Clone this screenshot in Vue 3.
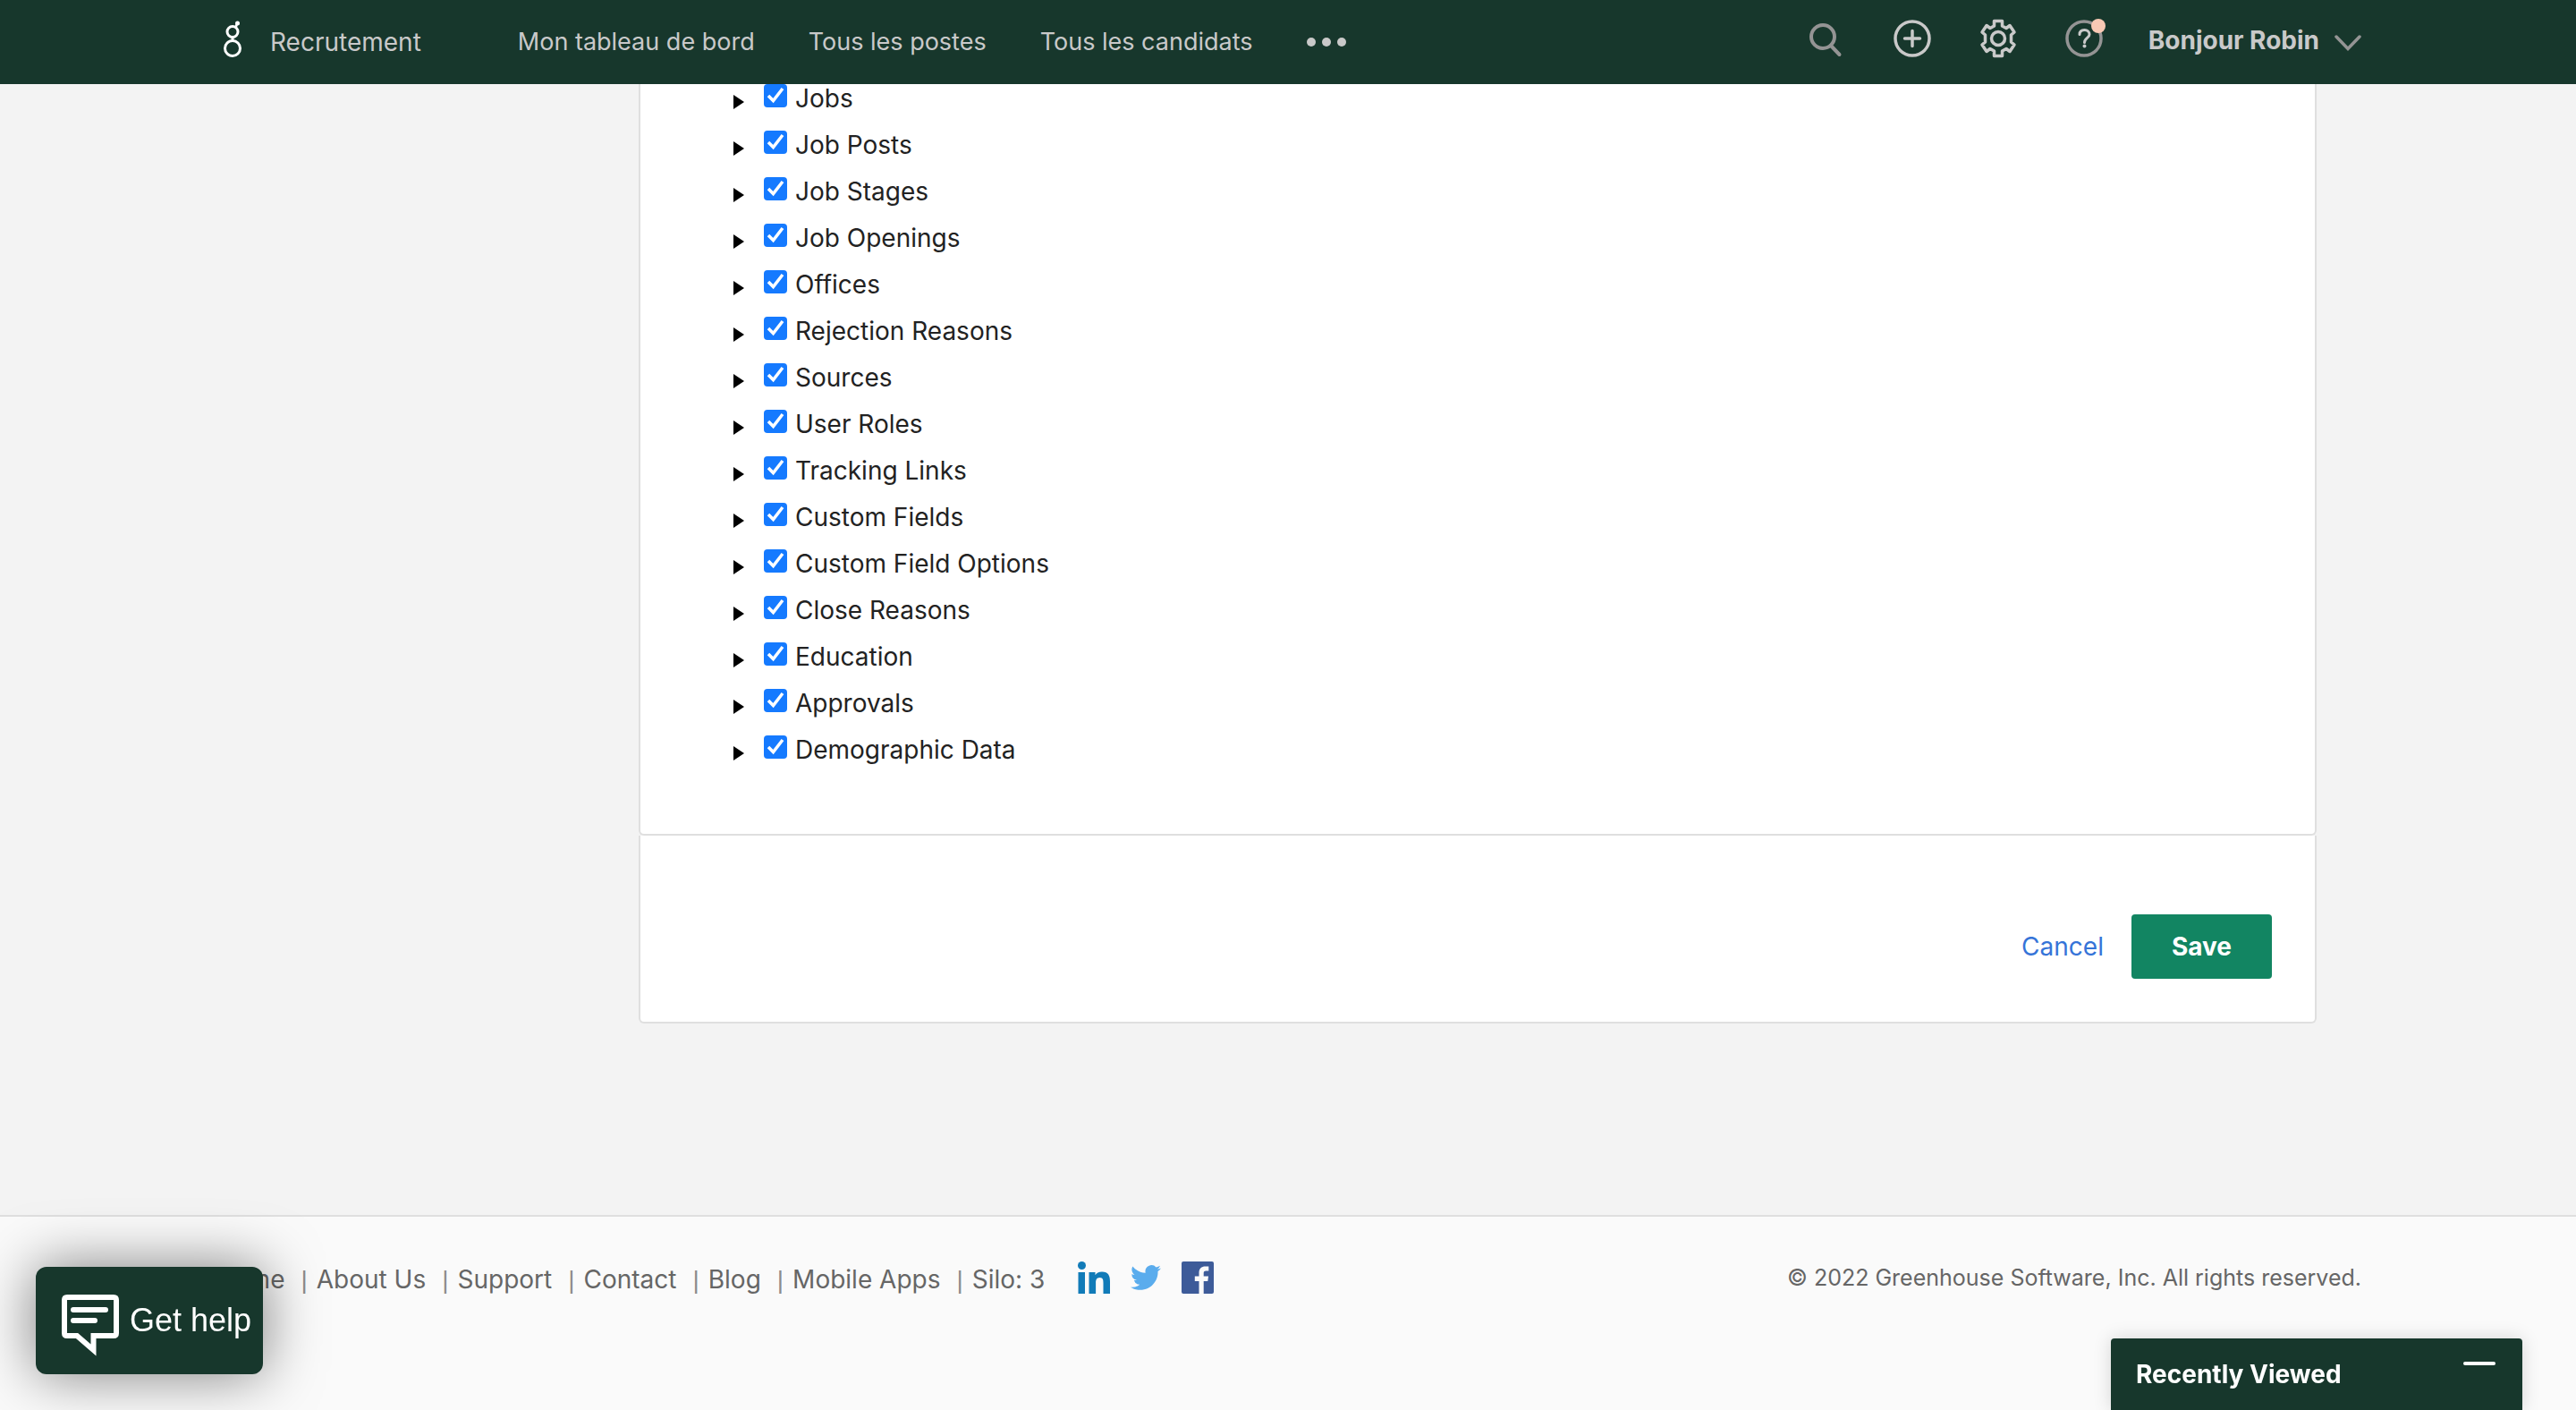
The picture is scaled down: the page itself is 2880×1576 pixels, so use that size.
<script setup>
import { reactive } from 'vue'

const navLinks = ['Mon tableau de bord', 'Tous les postes', 'Tous les candidats']

const permissions = reactive(
  [
    'Jobs',
    'Job Posts',
    'Job Stages',
    'Job Openings',
    'Offices',
    'Rejection Reasons',
    'Sources',
    'User Roles',
    'Tracking Links',
    'Custom Fields',
    'Custom Field Options',
    'Close Reasons',
    'Education',
    'Approvals',
    'Demographic Data',
  ].map((name) => ({ name, checked: true }))
)

const footerLinks = ['Home', 'About Us', 'Support', 'Contact', 'Blog', 'Mobile Apps']
</script>

<template>
  <div class="page">
    <header class="topbar">
      <a class="logo" href="#" aria-label="Greenhouse">
        <svg width="20" height="42" viewBox="0 0 20 42" fill="none" stroke="#fff">
          <circle cx="10" cy="31" r="8.500" stroke-width="3" />
          <circle cx="10" cy="12.500" r="6" stroke-width="3" />
          <path d="M13.500 8L15 3.500" stroke-width="2.500" />
          <circle cx="15.500" cy="3" r="2.500" fill="#fff" stroke="none" />
          <path d="M10 18v5" stroke-width="3" />
        </svg>
      </a>
      <a class="product" href="#">Recrutement</a>
      <nav class="nav">
        <a v-for="link in navLinks" :key="link" href="#">{{ link }}</a>
        <button class="more" type="button" aria-label="Plus">
          <span></span><span></span><span></span>
        </button>
      </nav>
      <div class="tools">
        <button type="button" aria-label="Rechercher">
          <svg width="44" height="44" viewBox="0 0 44 44" fill="none" stroke="#949494" stroke-width="4" stroke-linecap="round">
            <circle cx="18" cy="20" r="13" />
            <path d="M27 30L36.500 40" />
          </svg>
        </button>
        <button type="button" aria-label="Ajouter">
          <svg width="44" height="44" viewBox="0 0 44 44" fill="none" stroke="#c9c9c9" stroke-width="3.500" stroke-linecap="round">
            <circle cx="22" cy="22" r="19" />
            <path d="M22 13.500v17M13.500 22h17" />
          </svg>
        </button>
        <button type="button" aria-label="Configurer">
          <svg width="44" height="44" viewBox="0 0 44 44" fill="none" stroke="#c9c9c9" stroke-width="3.500" stroke-linejoin="round">
            <path d="M17.500 2.500h9v5.500l4.500 2.500 4-3 5 7.500-3.500 3v8l3.500 3-5 7.500-4-3-4.500 2.500v5.500h-9v-5.500l-4.500-2.500-4 3-5-7.500 3.500-3v-8l-3.500-3 5-7.500 4 3 4.500-2.500z" />
            <circle cx="22" cy="22" r="7.500" />
          </svg>
        </button>
        <button type="button" aria-label="Aide">
          <svg width="44" height="44" viewBox="0 0 44 44" fill="none">
            <circle cx="22" cy="22" r="19" stroke="#949494" stroke-width="3.500" />
            <path d="M17 17.500C17 14 19.500 12.500 22.500 12.500S28 14.500 28 17.500C28 21.500 22.500 21.500 22.500 26.500" stroke="#c9c9c9" stroke-width="3" stroke-linecap="round" />
            <circle cx="22.500" cy="30.500" r="2" fill="#c9c9c9" />
            <circle cx="38" cy="8" r="8" fill="#f9c9b4" />
          </svg>
        </button>
      </div>
      <button class="account" type="button">
        <span>Bonjour Robin</span>
        <svg width="30" height="18" viewBox="0 0 30 18" fill="none" stroke="#949494" stroke-width="3.500" stroke-linecap="round">
          <path d="M2 2l13 13.500L28 2" />
        </svg>
      </button>
    </header>

    <main class="content">
      <section class="card permissions">
        <ul>
          <li v-for="(item, index) in permissions" :key="item.name">
            <button class="expand" type="button" :aria-label="item.name"></button>
            <input :id="'permission-' + index" v-model="item.checked" type="checkbox" />
            <label :for="'permission-' + index">{{ item.name }}</label>
          </li>
        </ul>
      </section>
      <section class="card actions">
        <a class="cancel" href="#">Cancel</a>
        <button class="save" type="button">Save</button>
      </section>
    </main>

    <footer class="footer">
      <ul class="links">
        <li v-for="link in footerLinks" :key="link"><a href="#">{{ link }}</a></li>
        <li>Silo: 3</li>
      </ul>
      <div class="social">
        <a href="#" aria-label="LinkedIn">
          <svg width="36" height="36" viewBox="0 0 36 36" fill="#117bb8">
            <circle cx="4.500" cy="4.500" r="4.500" />
            <path d="M.5 12h7.500v24H.5zM12.500 12h7v3.300c1.200-2.300 4-3.900 7.500-3.900 7.200 0 9 4.600 9 11V36h-7.500V24c0-3-.2-6-3.900-6-3.800 0-4.500 2.800-4.500 5.800V36h-7.600z" />
          </svg>
        </a>
        <a href="#" aria-label="Twitter">
          <svg width="34" height="34" viewBox="0 0 24 24" fill="#5aaced">
            <path d="M23.950 4.570a10 10 0 0 1-2.820.78 4.960 4.960 0 0 0 2.160-2.730c-.95.560-2 .96-3.130 1.190a4.920 4.920 0 0 0-8.380 4.480C7.690 8.090 4.070 6.130 1.640 3.160a4.820 4.820 0 0 0-.67 2.480c0 1.710.87 3.210 2.190 4.100a4.900 4.900 0 0 1-2.230-.62v.06a4.920 4.920 0 0 0 3.950 4.830 5 5 0 0 1-2.210.08 4.940 4.940 0 0 0 4.600 3.420A9.870 9.870 0 0 1 0 19.540a14 14 0 0 0 7.550 2.210c9.050 0 14-7.500 14-13.980 0-.21 0-.42-.02-.63a9.940 9.940 0 0 0 2.460-2.550z" />
          </svg>
        </a>
        <a href="#" aria-label="Facebook">
          <svg width="36" height="36" viewBox="0 0 36 36">
            <rect width="36" height="36" rx="2" fill="#3d5b99" />
            <path d="M19.500 36V22H14.800v-5.400h4.700v-4c0-4.700 2.900-7.200 7-7.200 2 0 3.200.1 3.800.2v4.900h-2.900c-2.300 0-2.700 1.100-2.700 2.700v3.400H30l-.7 5.400h-4.600v14z" fill="#fafafa" />
          </svg>
        </a>
      </div>
      <p class="copyright">© 2022 Greenhouse Software, Inc. All rights reserved.</p>
    </footer>

    <button class="help" type="button">
      <svg width="64" height="70" viewBox="0 0 64 70" fill="none" stroke="#fff" stroke-width="6">
        <path d="M6 3h52q3 0 3 3v37q0 3-3 3H35.500v16L17 46H6q-3 0-3-3V6q0-3 3-3z" />
        <path d="M13 17h36M13 29h24" stroke-linecap="round" />
      </svg>
      <span>Get help</span>
    </button>

    <button class="recent" type="button">
      <span>Recently Viewed</span>
      <i></i>
    </button>
  </div>
</template>

<style>
body {
  margin: 0;
  background: #f3f3f3;
}
</style>

<style scoped>
.page {
  display: flex;
  flex-direction: column;
  min-height: 100vh;
  font: 28px/36px Inter, "Liberation Sans", sans-serif;
  color: #222;
}

a {
  color: inherit;
  text-decoration: none;
}

button {
  padding: 0;
  border: 0;
  background: none;
  font: inherit;
  color: inherit;
  cursor: pointer;
}

ul {
  margin: 0;
  padding: 0;
  list-style: none;
}

svg {
  display: block;
}

.topbar {
  position: sticky;
  top: 0;
  z-index: 1;
  display: flex;
  align-items: center;
  height: 94px;
  padding: 0 240px 0 250px;
  box-sizing: border-box;
  background: #17372c;
  color: #c9c9c9;
  white-space: nowrap;
}

.logo {
  padding-bottom: 6px;
}

.product {
  margin-left: 32px;
}

.nav {
  display: flex;
  align-items: center;
  gap: 60px;
  margin-left: 108px;
  font-size: 27px;
}

.more {
  display: flex;
  gap: 7px;
}

.more span {
  width: 10px;
  height: 10px;
  border-radius: 50%;
  background: #c9c9c9;
}

.tools {
  display: flex;
  gap: 52px;
  margin-left: auto;
  padding-bottom: 8px;
}

.tools svg {
  overflow: visible;
}

.account {
  display: flex;
  align-items: center;
  gap: 17px;
  margin-left: 50px;
  padding-bottom: 4px;
  font-weight: 700;
}

.account svg {
  margin-top: 6px;
}

.content {
  flex: 1;
  padding: 0 290px 0 714px;
}

.card {
  border: 2px solid #dfdfdf;
  border-top: 0;
  border-radius: 0 0 6px 6px;
  background: #fff;
}

.permissions {
  padding: 0 104px 58px;
}

.permissions li {
  display: flex;
  align-items: flex-start;
  height: 52px;
}

.expand {
  width: 0;
  height: 0;
  margin: 12px 22px 0 0;
  border: solid transparent;
  border-width: 8px 0 8px 12px;
  border-left-color: #000;
}

.permissions input {
  appearance: none;
  width: 26px;
  height: 26px;
  margin: 0 9px 0 0;
  border: 1px solid #767676;
  border-radius: 4px;
}

.permissions input:checked {
  border: 0;
  background: #157aff url("data:image/svg+xml,%3Csvg xmlns='http://www.w3.org/2000/svg' viewBox='0 0 26 26' fill='none' stroke='white' stroke-width='3.500'%3E%3Cpath d='M5 13l5.500 5.500L21 5'/%3E%3C/svg%3E");
}

.permissions label {
  line-height: 32px;
}

.actions {
  display: flex;
  align-items: center;
  justify-content: flex-end;
  gap: 31px;
  padding: 88px 48px 48px;
}

.cancel {
  color: #3574d8;
}

.save {
  padding: 18px 45px;
  border-radius: 4px;
  background: #128562;
  color: #fff;
  font-weight: 700;
}

.footer {
  display: flex;
  align-items: flex-start;
  min-height: 218px;
  padding: 50px 240px 0;
  box-sizing: border-box;
  border-top: 2px solid #dfdfdf;
  background: #fafafa;
  color: #666;
  white-space: nowrap;
}

.links {
  display: flex;
  padding-top: 2px;
}

.links li + li::before {
  content: "|";
  margin: 0 10px 0 18px;
  color: #8c8c8c;
  font-family: "Liberation Sans", Arial, sans-serif;
}

.social {
  display: flex;
  align-items: center;
  gap: 23px;
  margin-left: 37px;
}

.copyright {
  margin: 0 0 0 auto;
  font-size: 25px;
}

.help {
  position: fixed;
  left: 40px;
  bottom: 40px;
  z-index: 2;
  display: flex;
  align-items: center;
  gap: 12px;
  height: 120px;
  padding: 0 13px 0 29px;
  border-radius: 12px;
  background: #17372c;
  box-shadow: 0 0 64px rgba(0, 0, 0, 0.5);
  color: #fff;
  font: 36px/40px "Liberation Sans", Arial, sans-serif;
  white-space: nowrap;
}

.help svg {
  margin-top: 12px;
}

.recent {
  position: fixed;
  right: 60px;
  bottom: 0;
  z-index: 2;
  display: flex;
  align-items: flex-start;
  justify-content: space-between;
  width: 460px;
  height: 80px;
  padding: 22px 30px 0 28px;
  border-radius: 4px 4px 0 0;
  background: #17372c;
  box-shadow: 0 0 20px rgba(0, 0, 0, 0.15);
  color: #fff;
  font-weight: 700;
}

.recent i {
  width: 36px;
  height: 4px;
  margin-top: 4px;
  border-radius: 2px;
  background: #fff;
}
</style>
